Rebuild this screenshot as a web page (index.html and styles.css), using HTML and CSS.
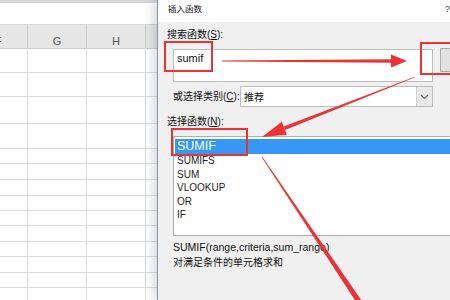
FILE: index.html
```html
<!DOCTYPE html>
<html lang="zh-CN">
  <head>
    <meta charset="UTF-8" />
    <meta name="viewport" content="width=device-width, initial-scale=1.0" />
    <title>插入函数</title>
    <link rel="stylesheet" href="styles.css">
  </head>
  <body>
    <div class="sheet">
      <div class="formula"></div>
      <div class="row head"><span>F</span><span>G</span><span>H</span><span></span></div>
      <div class="row r25"><span></span><span></span><span></span><span></span></div>
      <div class="row r24"><span></span><span></span><span></span><span></span></div>
      <div class="row r27"><span></span><span></span><span></span><span></span></div>
      <div class="row r25"><span></span><span></span><span></span><span></span></div>
      <div class="row r15"><span></span><span></span><span></span><span></span></div>
      <div class="row"><span></span><span></span><span></span><span></span></div>
      <div class="row"><span></span><span></span><span></span><span></span></div>
      <div class="row r15"><span></span><span></span><span></span><span></span></div>
      <div class="row r15"><span></span><span></span><span></span><span></span></div>
      <div class="row"><span></span><span></span><span></span><span></span></div>
      <div class="row r15"><span></span><span></span><span></span><span></span></div>
      <div class="row"><span></span><span></span><span></span><span></span></div>
      <div class="row r15"><span></span><span></span><span></span><span></span></div>
      <div class="row"><span></span><span></span><span></span><span></span></div>
    </div>

    <div class="dialog">
      <div class="titlebar">
        <span class="title">插入函数</span>
        <span class="help">?</span>
      </div>
      <div class="content">
        <div class="label">搜索函数(<u>S</u>):</div>
        <div class="search-row">
          <div class="search">sumif</div>
          <button class="go" aria-label="转到"></button>
        </div>
        <div class="category-row">
          <span class="cat-label">或选择类别(<u>C</u>):</span>
          <div class="select">
            <span>推荐</span>
            <span class="caret">
              <svg width="9" height="6" viewBox="0 0 9 6" fill="none" stroke="#666" stroke-width="1.2">
                <path d="M1 1l3.5 3.5L8 1" />
              </svg>
            </span>
          </div>
        </div>
        <div class="label list-label">选择函数(<u>N</u>):</div>
        <ul class="list">
          <li class="selected">SUMIF</li>
          <li>SUMIFS</li>
          <li>SUM</li>
          <li>VLOOKUP</li>
          <li>OR</li>
          <li>IF</li>
        </ul>
        <div class="syntax">SUMIF(range,criteria,sum_range)</div>
        <div class="desc">对满足条件的单元格求和</div>
      </div>
    </div>

    <!-- tutorial marks drawn over the screenshot -->
    <svg class="marks" width="450" height="300" viewBox="0 0 450 300">
      <g fill="none" stroke="#ea3434" stroke-width="2">
        <rect x="165" y="42" width="47" height="29" />
        <rect x="421" y="43" width="40" height="31" />
        <rect x="172" y="129" width="75" height="26" />
      </g>
      <g fill="#ea3434">
        <polygon points="222,60.6 222,61.4 393,62.7 393,59.3" />
        <polygon points="391,54.5 407,61 391,67.5" />
        <polygon points="414.85,76.63 415.15,77.37 285,129.9 283.7,126.6" />
        <polygon points="262,137 286.9,134.8 281.8,121.7" />
        <polygon points="261.67,157.22 262.33,156.78 366.8,308.1 362.2,311.3" />
      </g>
    </svg>
  </body>
</html>
```

FILE: styles.css
```css
* {
  box-sizing: border-box;
  margin: 0;
  padding: 0;
}

body {
  position: relative;
  width: 450px;
  height: 300px;
  overflow: hidden;
  background: #fff;
  font-family: "Liberation Sans", "Noto Sans CJK SC", sans-serif;
  color: #111;
}

/* spreadsheet behind the dialog */
.sheet {
  width: 236px;
  margin-left: -31px;

  .formula {
    height: 25px;
    border-top: 3px solid #d6d6d6;
    border-bottom: 1px solid #d8d8d8;
  }

  .row {
    display: grid;
    grid-template-columns: repeat(4, 59px);
    height: 16px;

    span {
      border-right: 1px solid #dcdcdc;
      border-bottom: 1px solid #dcdcdc;
    }
  }

  .r15 { height: 15px; }
  .r24 { height: 24px; }
  .r25 { height: 25px; }
  .r27 { height: 27px; }

  .row.head {
    height: 23px;
    background: #e6e6e6;

    span {
      border-color: #cbcbcb;
      padding-top: 10px;
      font-size: 11px;
      line-height: 13px;
      text-align: center;
      color: #555;
    }
  }
}

.dialog {
  position: absolute;
  top: 0;
  left: 157px;
  width: 360px;
  height: 300px;
  background: #f0f0f0;
  border-left: 1px solid #8d949c;
  box-shadow: -4px 0 9px rgba(70, 90, 110, 0.22);

  .titlebar {
    display: flex;
    height: 22px;
    padding: 4px 0 0 10px;
    background: #fff;
    font-size: 8.5px;
    line-height: 11px;
  }

  .help {
    margin-left: auto;
    margin-right: 67px;
    font-size: 9px;
    color: #444;
  }

  .content {
    padding-left: 9px;
    font-size: 10px;
  }

  .label {
    margin-top: 7px;
    line-height: 12px;
  }

  .search-row {
    display: flex;
    align-items: flex-start;
    gap: 7px;
    margin: 7px 0 0 6px;

    .search {
      width: 260px;
      height: 33px;
      margin-top: 1px;
      padding: 2px 0 0 3px;
      background: #fff;
      border: 1px solid #bcbcbc;
      font-size: 11px;
      line-height: 13px;
    }

    .go {
      width: 72px;
      height: 24px;
      background: #e1e1e1;
      border: 1px solid #adadad;
    }
  }

  .category-row {
    display: flex;
    align-items: center;
    height: 21px;
    margin: 4px 0 0 6px;

    .cat-label {
      width: 67px;
      line-height: 12px;
    }

    .select {
      display: flex;
      align-items: center;
      width: 193px;
      height: 21px;
      padding-left: 3px;
      background: #fff;
      border: 1px solid #bcbcbc;

      .caret {
        display: flex;
        align-items: center;
        justify-content: center;
        width: 16px;
        height: 19px;
        margin-left: auto;
        background: #e9e9e9;
        border-left: 1px solid #d0d0d0;
      }
    }
  }

  .list-label {
    margin-top: 9px;
  }

  .list {
    width: 340px;
    height: 100px;
    margin: 8px 0 0 6px;
    padding: 2px 0 0 1px;
    list-style: none;
    background: #fff;
    border: 1px solid #acacac;

    li {
      padding-left: 2px;
      font-size: 10px;
      line-height: 13.5px;
      color: #222;
    }

    li.selected {
      height: 15px;
      background: #3797f5;
      color: #fff;
      font-size: 12.5px;
      line-height: 15px;
    }
  }

  .syntax {
    margin: 5px 0 0 6px;
    font-size: 10.5px;
    line-height: 13px;
  }

  .desc {
    margin: 2px 0 0 6px;
    font-size: 10px;
    line-height: 14px;
  }
}

.marks {
  position: absolute;
  top: 0;
  left: 0;
  pointer-events: none;
}
```
